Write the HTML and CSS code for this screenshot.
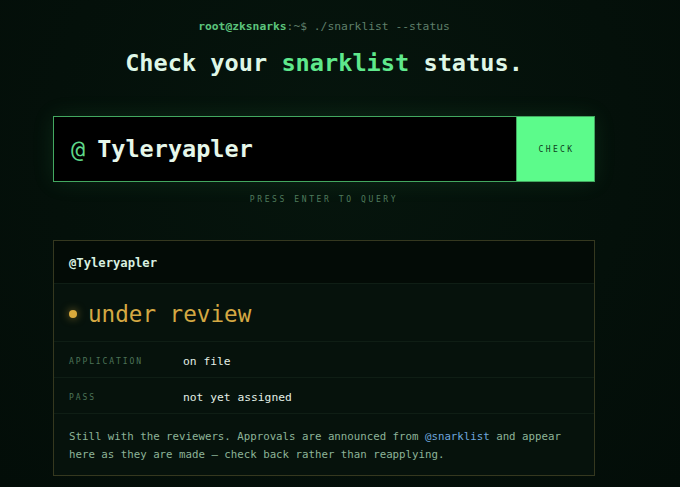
FILE: index.html
```html
<!DOCTYPE html>
<html>
<head>
<meta charset="utf-8">
<link rel="stylesheet" href="styles.css">
</head>
<body>
<main class="wrap">
  <div class="prompt"><span class="user">root@zksnarks</span>:~$ ./snarklist --status</div>
  <h1 class="title">Check your <span class="accent">snarklist</span> status.</h1>
  <form class="search">
    <div class="field"><span class="at">@</span><span class="handle">Tyleryapler</span></div>
    <button class="check" type="button">CHECK</button>
  </form>
  <div class="hint">PRESS ENTER TO QUERY</div>
  <section class="card">
    <div class="card-head">@Tyleryapler</div>
    <div class="status"><span class="dot"></span><span class="status-text">under review</span></div>
    <div class="row"><span class="label">APPLICATION</span><span class="value">on file</span></div>
    <div class="row"><span class="label">PASS</span><span class="value">not yet assigned</span></div>
    <div class="note">
      <div class="line"><span>Still with the reviewers. Approvals are announced from </span><span class="link">@snarklist</span><span> and appear</span></div>
      <div class="line"><span>here as they are made — check back rather than reapplying.</span></div>
    </div>
  </section>
</main>
</body>
</html>
```
FILE: styles.css
```css
* { box-sizing: border-box; }
html, body { margin: 0; height: 100%; }
body {
  background: radial-gradient(ellipse at 50% 30%, #06150d 0%, #04100a 60%, #030d08 100%);
  font-family: "DejaVu Sans Mono", "Liberation Mono", monospace;
  color: #dcf2e3;
  padding-top: 19px;
  overflow: hidden;
}
.wrap {
  width: 542px;
  margin-left: 53px;
  display: flex;
  flex-direction: column;
}
.prompt {
  text-align: center;
  font-size: 11.3px;
  line-height: 16px;
  color: #5f7f6a;
}
.prompt .user { color: #5cc47c; font-weight: bold; }
.title {
  margin: 13px 0 0;
  text-align: center;
  font-size: 23.6px;
  line-height: 30px;
  font-weight: bold;
  color: #dff7e7;
}
.title .accent { color: #5fe88c; }
.search {
  margin: 38px 0 0;
  height: 66px;
  display: flex;
  border: 1px solid #43a860;
  background: #000;
  box-shadow: 0 0 22px rgba(70, 200, 110, 0.12);
}
.field {
  flex: 1;
  display: flex;
  align-items: center;
  padding-left: 17px;
  font-size: 23.5px;
}
.field .at { color: #5fd88a; margin-right: 12px; }
.field .handle { font-weight: bold; color: #e6f7ea; }
.check {
  width: 78px;
  border: 0;
  border-left: 1px solid #43a860;
  background: #5cfb8b;
  color: #0f3d1d;
  font-family: inherit;
  font-size: 8px;
  letter-spacing: 2.4px;
  padding: 0 0 0 2px;
}
.hint {
  margin-top: 12px;
  text-align: center;
  font-size: 8px;
  line-height: 12px;
  letter-spacing: 2.6px;
  color: #4f7a5c;
}
.card {
  margin-top: 34px;
  border: 1px solid #35381f;
  background: #06120c;
}
.card-head {
  height: 43px;
  padding-left: 15px;
  padding-top: 1px;
  display: flex;
  align-items: center;
  font-size: 12.2px;
  font-weight: bold;
  color: #d9f0e0;
  background: #030b06;
  border-bottom: 1px solid #0f1e15;
}
.status {
  height: 58px;
  display: flex;
  align-items: center;
  gap: 11px;
  padding-left: 15px;
  padding-top: 2px;
  border-bottom: 1px solid #0f1e15;
}
.dot {
  width: 8px;
  height: 8px;
  border-radius: 50%;
  background: #d9a93c;
  box-shadow: 0 0 8px rgba(217, 169, 60, 0.6);
}
.status-text {
  font-size: 22.6px;
  line-height: 28px;
  color: #d4a843;
}
.row {
  height: 36px;
  display: grid;
  grid-template-columns: 114px 1fr;
  align-items: center;
  padding-left: 15px;
  padding-top: 3px;
  border-bottom: 1px solid #0f1e15;
}
.label {
  font-size: 8px;
  letter-spacing: 1.9px;
  color: #4d7458;
}
.value {
  font-size: 11.3px;
  color: #e2efe6;
}
.note {
  padding: 14px 15px 11px;
  font-size: 10.75px;
  line-height: 18px;
  color: #8db498;
}
.line { white-space: pre; }
.link { color: #6ea6dc; }
```
